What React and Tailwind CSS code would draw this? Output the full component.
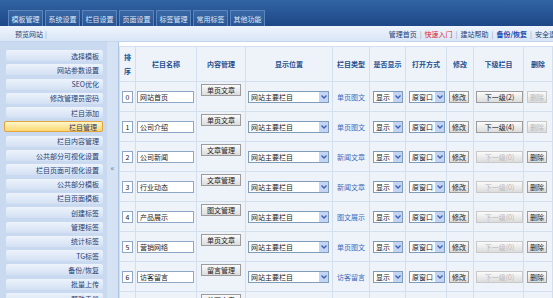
import React from "react";

const tabs = ["模板管理", "系统设置", "栏目设置", "页面设置", "标签管理", "常用标签", "其他功能"];
const side = [
  "选择模板", "网站参数设置", "SEO优化", "修改管理员密码", "栏目添加", "栏目管理", "栏目内容管理",
  "公共部分可视化设置", "栏目页面可视化设置", "公共部分模板", "栏目页面模板", "创建标签", "管理标签",
  "统计标签", "TG标签", "备份/恢复", "批量上传", "帮助手册",
];
const rows = [
  { n: "0", name: "网站首页", btn: "单页文章", type: "单页图文", sub: "下一级(2)", subOn: true, del: false },
  { n: "1", name: "公司介绍", btn: "单页文章", type: "单页图文", sub: "下一级(4)", subOn: true, del: false },
  { n: "2", name: "公司新闻", btn: "文章管理", type: "新闻文章", sub: "下一级(0)", subOn: false, del: true },
  { n: "3", name: "行业动态", btn: "文章管理", type: "新闻文章", sub: "下一级(0)", subOn: false, del: true },
  { n: "4", name: "产品展示", btn: "图文管理", type: "图文展示", sub: "下一级(0)", subOn: false, del: true },
  { n: "5", name: "营销网络", btn: "单页文章", type: "单页图文", sub: "下一级(0)", subOn: false, del: true },
  { n: "6", name: "访客留言", btn: "留言管理", type: "访客留言", sub: "下一级(0)", subOn: false, del: true },
  { n: "7", name: "联系我们", btn: "单页文章", type: "单页图文", sub: "下一级(0)", subOn: false, del: true },
];

function Arrow() {
  return (
    <svg width="6" height="4" viewBox="0 0 6 4">
      <path d="M0.5 0.5 L3 3 L5.5 0.5" fill="none" stroke="#3a62b0" strokeWidth="1.3" />
    </svg>
  );
}

function Sel({ w, text }) {
  return (
    <div className={`flex h-[12px] items-center border border-[#7f9db9] bg-white ${w}`}>
      <span className="flex-1 whitespace-nowrap pl-[2px] leading-[10px] text-[#222]">{text}</span>
      <span className="flex h-full w-[9px] items-center justify-center bg-[#c3d4f5]">
        <Arrow />
      </span>
    </div>
  );
}

function Btn({ w, children, on = true }) {
  return (
    <div
      className={`flex h-[12px] items-center justify-center whitespace-nowrap border bg-linear-to-b from-[#fbfbfb] to-[#dcdcdc] leading-[10px] ${
        on ? "border-[#9c9c9c] text-[#222]" : "border-[#c9c9c9] text-[#b9b9b9]"
      } ${w}`}
    >
      {children}
    </div>
  );
}

function Sep() {
  return <span className="px-[3px] text-[#8a9ab0]">|</span>;
}

export default function App() {
  return (
    <div className="h-[298px] w-[553px] overflow-hidden bg-white font-['SimSun','Noto_Sans_CJK_SC','Noto_Sans',sans-serif] text-[7px] leading-[10px]">
      {/* header */}
      <div className="flex h-[26px] items-end bg-linear-to-b from-[#3264a4] to-[#1d4786] pl-[8px]">
        <div className="flex gap-[2px]">
          {tabs.map((t) => (
            <div
              key={t}
              className="flex h-[16px] w-[35px] items-center justify-center border-t border-l border-r border-[#5d85bd] bg-linear-to-b from-[#3a68a6] to-[#2a5594] text-[#dfe8f5]"
            >
              {t}
            </div>
          ))}
        </div>
      </div>
      {/* sub bar */}
      <div className="flex h-[16px] items-center overflow-hidden border-b border-[#c3d4ec] bg-linear-to-b from-[#eef4fc] to-[#d9e6f6]">
        <div className="pl-[15px] text-[#1f3f74]">
          预览网站<span className="pl-[2px] text-[#8a9ab0]">|</span>
        </div>
        <div className="-mr-[10px] ml-auto flex whitespace-nowrap text-[#1f3f74]">
          <span>管理首页</span>
          <Sep />
          <span className="text-[#e0242a]">快速入门</span>
          <Sep />
          <span>建站帮助</span>
          <Sep />
          <span className="font-bold text-[#1c48b0]">备份/恢复</span>
          <Sep />
          <span>安全退出</span>
        </div>
      </div>
      {/* main */}
      <div className="flex h-[256px]">
        {/* sidebar */}
        <div className="w-[107px] bg-[#c9d9f0] pt-[8px]">
          <div className="flex flex-col gap-[3.3px]">
            {side.map((s) => {
              const active = s === "栏目管理";
              return active ? (
                <div
                  key={s}
                  className="mx-[4px] flex h-[11px] items-center justify-end rounded-[2px] border border-[#e3a43a] bg-linear-to-b from-[#fff6c8] to-[#fdd66b] pr-[5px] text-[#1f3f74]"
                >
                  {s}
                </div>
              ) : (
                <div
                  key={s}
                  className="ml-[6px] mr-[4px] flex h-[11px] items-center justify-end rounded-[2px] bg-linear-to-b from-[#edf3fb] to-[#d3e0f3] pr-[4px] text-[#1f3f74]"
                >
                  {s}
                </div>
              );
            })}
          </div>
        </div>
        {/* divider */}
        <div className="flex w-[12px] flex-col items-center border-r border-[#aec4e3] bg-[#d4e2f4] pt-[121px] text-[8px] text-[#5a76a6]">
          «
        </div>
        {/* table */}
        <div className="flex-1 bg-white pt-[4px]">
          <table className="w-[433px] table-fixed border-collapse bg-[#eef3fa]">
            <colgroup>
              <col className="w-[16px]" />
              <col className="w-[61px]" />
              <col className="w-[49px]" />
              <col className="w-[87px]" />
              <col className="w-[37px]" />
              <col className="w-[36px]" />
              <col className="w-[41px]" />
              <col className="w-[27px]" />
              <col className="w-[50px]" />
              <col className="w-[29px]" />
            </colgroup>
            <thead>
              <tr className="h-[35px] font-bold text-[#1d4e8f]">
                <th className="border border-[#d3dfef] leading-[14px]">
                  排<br />序
                </th>
                <th className="border border-[#d3dfef]">栏目名称</th>
                <th className="border border-[#d3dfef]">内容管理</th>
                <th className="border border-[#d3dfef]">显示位置</th>
                <th className="border border-[#d3dfef]">栏目类型</th>
                <th className="border border-[#d3dfef]">是否显示</th>
                <th className="border border-[#d3dfef]">打开方式</th>
                <th className="border border-[#d3dfef]">修改</th>
                <th className="border border-[#d3dfef]">下级栏目</th>
                <th className="border border-[#d3dfef]">删除</th>
              </tr>
            </thead>
            <tbody>
              {rows.map((r) => (
                <tr key={r.n} className="h-[30px]">
                  <td className="border border-[#d3dfef] align-middle">
                    <div className="mx-auto flex h-[12px] w-[11px] items-center justify-center border border-[#8fa6c4] bg-white text-[#222]">
                      {r.n}
                    </div>
                  </td>
                  <td className="border border-[#d3dfef] align-middle">
                    <div className="ml-[1px] flex h-[12px] w-[57px] items-center border border-[#8fa6c4] bg-white pl-[2px] text-[#222]">
                      {r.name}
                    </div>
                  </td>
                  <td className="border border-[#d3dfef] pt-[2px] align-top">
                    <Btn w="w-[40px] mx-auto">{r.btn}</Btn>
                  </td>
                  <td className="border border-[#d3dfef] align-middle">
                    <Sel w="w-[81px] ml-[2px]" text="网站主要栏目" />
                  </td>
                  <td className="border border-[#d3dfef] text-center align-middle text-[#3a6cc0]">{r.type}</td>
                  <td className="border border-[#d3dfef] align-middle">
                    <Sel w="w-[30px] ml-[3px]" text="显示" />
                  </td>
                  <td className="border border-[#d3dfef] align-middle">
                    <Sel w="w-[36px] ml-[3px]" text="原窗口" />
                  </td>
                  <td className="border border-[#d3dfef] align-middle">
                    <Btn w="w-[20px] ml-[2px]">修改</Btn>
                  </td>
                  <td className="border border-[#d3dfef] align-middle">
                    <Btn w="w-[47px] ml-[2px]" on={r.subOn}>
                      {r.sub}
                    </Btn>
                  </td>
                  <td className="border border-[#d3dfef] align-middle">
                    <Btn w="w-[20px] ml-[3px]" on={r.del}>
                      删除
                    </Btn>
                  </td>
                </tr>
              ))}
            </tbody>
          </table>
        </div>
      </div>
    </div>
  );
}
